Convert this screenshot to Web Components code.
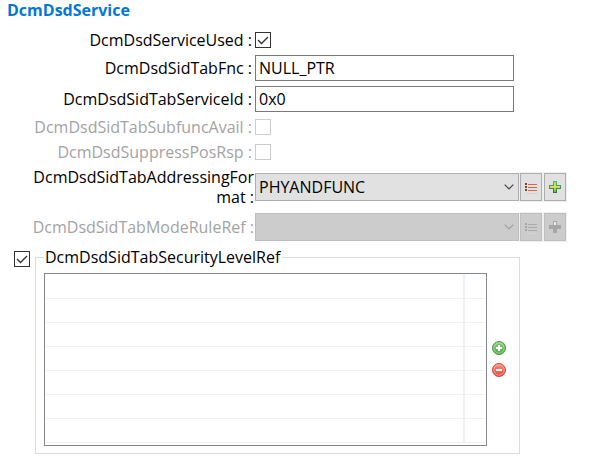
<!DOCTYPE html>
<html lang="en">
<head>
<meta charset="utf-8">
<title>DcmDsdService</title>
<style>
body{margin:0;background:#fff;color:#000;font:16px/20px "Open Sans","Noto Sans",sans-serif}
dcm-text-row{margin:3px 0}
dcm-text-row+dcm-text-row{margin-top:5px}
dcm-check-row[disabled]{margin-bottom:1px}
dcm-ref-row{margin:3px 0 6px}
</style>
</head>
<body>
<dcm-section heading="DcmDsdService">
  <dcm-check-row label="DcmDsdServiceUsed" checked></dcm-check-row>
  <dcm-text-row label="DcmDsdSidTabFnc" value="NULL_PTR"></dcm-text-row>
  <dcm-text-row label="DcmDsdSidTabServiceId" value="0x0"></dcm-text-row>
  <dcm-check-row label="DcmDsdSidTabSubfuncAvail" disabled></dcm-check-row>
  <dcm-check-row label="DcmDsdSuppressPosRsp" disabled></dcm-check-row>
  <dcm-ref-row label="DcmDsdSidTabAddressingFormat" value="PHYANDFUNC"></dcm-ref-row>
  <dcm-ref-row label="DcmDsdSidTabModeRuleRef" disabled></dcm-ref-row>
  <dcm-ref-list label="DcmDsdSidTabSecurityLevelRef" rows="7"></dcm-ref-list>
</dcm-section>
<script>
const checkStyle = `
input[type=checkbox]{appearance:none;box-sizing:border-box;width:16px;height:16px;margin:0;border:1px solid #333;background:#fff;display:grid;place-items:center}
input[type=checkbox]:disabled{border-color:#ccc}
input[type=checkbox]:checked{background:#fff url("data:image/svg+xml,%3Csvg xmlns='http://www.w3.org/2000/svg' viewBox='0 0 14 14'%3E%3Cpath d='M2 7l3.5 3.5L12 4' fill='none' stroke='%23333' stroke-width='1.4'/%3E%3C/svg%3E") center/14px 14px no-repeat}`;
const rowStyle = `
*{box-sizing:border-box}
:host{display:grid;grid-template-columns:225px minmax(0,1fr);align-items:center;padding:0 23px 0 30px}
label{text-align:right;padding-right:3px;overflow-wrap:anywhere}
:host([disabled]) label{color:#a3a3a3}
input,select{font:inherit;color:inherit}
` + checkStyle;

class Row extends HTMLElement {
  connectedCallback(){
    const root = this.attachShadow({mode:"open"});
    root.innerHTML = `<style>${rowStyle}${this.css}</style><label for="f">${this.getAttribute("label")} :</label>${this.field()}`;
  }
  get off(){ return this.hasAttribute("disabled") ? "disabled" : ""; }
}
customElements.define("dcm-check-row", class extends Row {
  get css(){ return `:host{height:24px}`; }
  field(){ return `<input id="f" type="checkbox" ${this.hasAttribute("checked") ? "checked" : ""} ${this.off}>`; }
});
customElements.define("dcm-text-row", class extends Row {
  get css(){ return `:host{padding-right:75px}input{width:100%;height:26px;border:1px solid #7a7a7a;border-radius:0;background:#fff;padding:0 3px;margin:0}`; }
  field(){ return `<input id="f" type="text" value="${this.getAttribute("value")}">`; }
});
customElements.define("dcm-ref-row", class extends Row {
  get css(){ return `
label{padding-right:1px}
.field{display:flex;height:28px}
.pick{flex:1;min-width:0;display:grid;margin-right:1px}
.pick>*{grid-area:1/1}
select{appearance:none;width:100%;height:28px;border:1px solid #adadad;border-radius:0;background:#e1e1e1;padding:0 24px 0 3px;margin:0;opacity:1}
.pick svg{justify-self:end;align-self:center;margin-right:5px;pointer-events:none}
button{width:22px;height:28px;padding:0;border:1px solid #adadad;background:#e1e1e1;box-shadow:0 0 0 1px #f0f0f0;display:grid;place-items:center}
button+button{margin-left:2px}
:host([disabled]) :is(select,button){background:#ccc;border-color:#bfbfbf}`; }
  field(){
    const off = this.off, v = this.getAttribute("value") || "";
    const dot = off ? "#a3a3a3" : "#7c402e", bar = off ? "#aaa" : "#d2694a";
    const plus = off
      ? `<path d="M4 0h4v4h4v4H8v4H4V8H0V4h4z" fill="#a6a6a6"/><path d="M5 1h2v3H5z" fill="#f0f0f0"/>`
      : `<defs><linearGradient id="o" x2="0" y2="1"><stop stop-color="#62b375"/><stop offset="1" stop-color="#2b7048"/></linearGradient><linearGradient id="g" x2="0" y2="1"><stop stop-color="#a9d968"/><stop offset=".45" stop-color="#dbe45a"/><stop offset="1" stop-color="#70b343"/></linearGradient></defs><path d="M4 0h4v4h4v4H8v4H4V8H0V4h4z" fill="url(#o)"/><path d="M5 1h2v4h4v2H7v4H5V7H1V5h4z" fill="url(#g)"/>`;
    return `<div class="field"><div class="pick"><select id="f" ${off}><option>${v}</option></select>
<svg width="10" height="6" viewBox="0 0 10 6" aria-hidden="true"><path d="M.7.7 5 5 9.3.7" fill="none" stroke="${off ? "#a0a0a0" : "#444"}" stroke-width="1.2"/></svg></div>
<button type="button" aria-label="List" ${off}><svg width="14" height="14" viewBox="0 0 14 14"><path d="M1 3h2v2H1zM1 6h2v2H1zM1 9h2v2H1z" fill="${dot}"/><path d="M4 4h9v1H4zM4 7h9v1H4zM4 10h9v1H4z" fill="${bar}"/><path d="M2 13.5h12" stroke="#d2d2d2"/></svg></button>
<button type="button" aria-label="Add" ${off}><svg width="12" height="12" viewBox="0 0 12 12">${plus}</svg></button></div>`;
  }
});
customElements.define("dcm-ref-list", class extends HTMLElement {
  connectedCallback(){
    const name = this.getAttribute("label");
    const rows = "<tr><td></td><td></td></tr>".repeat(+this.getAttribute("rows"));
    const ball = (id, a, b, c, sign) => `<svg width="14" height="14" viewBox="0 0 14 14"><defs><linearGradient id="${id}" x2="0" y2="1"><stop stop-color="${a}"/><stop offset="1" stop-color="${b}"/></linearGradient></defs><circle cx="7" cy="7" r="6.5" fill="url(#${id})" stroke="${c}"/><circle cx="7" cy="7" r="5.2" fill="none" stroke="#fff" stroke-opacity=".35"/><path d="${sign}" stroke="#fff" stroke-width="2"/></svg>`;
    this.attachShadow({mode:"open"}).innerHTML = `<style>
*{box-sizing:border-box}
:host{display:flex;align-items:flex-start;padding:0 69px 0 14px}
${checkStyle}
input[type=checkbox]{margin-top:4px;flex:none}
fieldset{flex:1;min-width:0;margin:0 0 0 5px;border:1px solid #dcdcdc;padding:6px 13px 7px 8px;display:flex;align-items:center;gap:5px}
legend{padding:0 2px 0 1px}
.box{flex:1;min-width:0;border:1px solid #828790;padding:0 1px;height:173px}
table{width:100%;border-collapse:collapse;table-layout:fixed}
td{height:24px;padding:0;border-bottom:1px solid #f0f0f0}
td:first-child{border-right:2px solid #eef1f7}
.tools{display:grid;gap:8px;padding-bottom:2px}
button{width:14px;height:14px;padding:0;border:0;background:none;display:grid}
</style>
<input type="checkbox" checked aria-label="${name}">
<fieldset><legend>${name}</legend>
<div class="box"><table aria-label="${name}"><colgroup><col><col style="width:21px"></colgroup>${rows}</table></div>
<div class="tools"><button type="button" aria-label="Add">${ball("green","#8fcb7d","#4fae42","#4b9347","M4 7h6M7 4v6")}</button><button type="button" aria-label="Remove">${ball("red","#ff8b7b","#e64a3e","#c9493d","M4 7h6")}</button></div></fieldset>`;
  }
});
customElements.define("dcm-section", class extends HTMLElement {
  connectedCallback(){
    this.attachShadow({mode:"open"}).innerHTML = `<style>
:host{display:block}
h1{margin:0 0 8px;padding-left:7px;font-size:16px;line-height:20px;color:#0078d7}
</style><h1>${this.getAttribute("heading")}</h1><slot></slot>`;
  }
});
</script>
</body>
</html>
